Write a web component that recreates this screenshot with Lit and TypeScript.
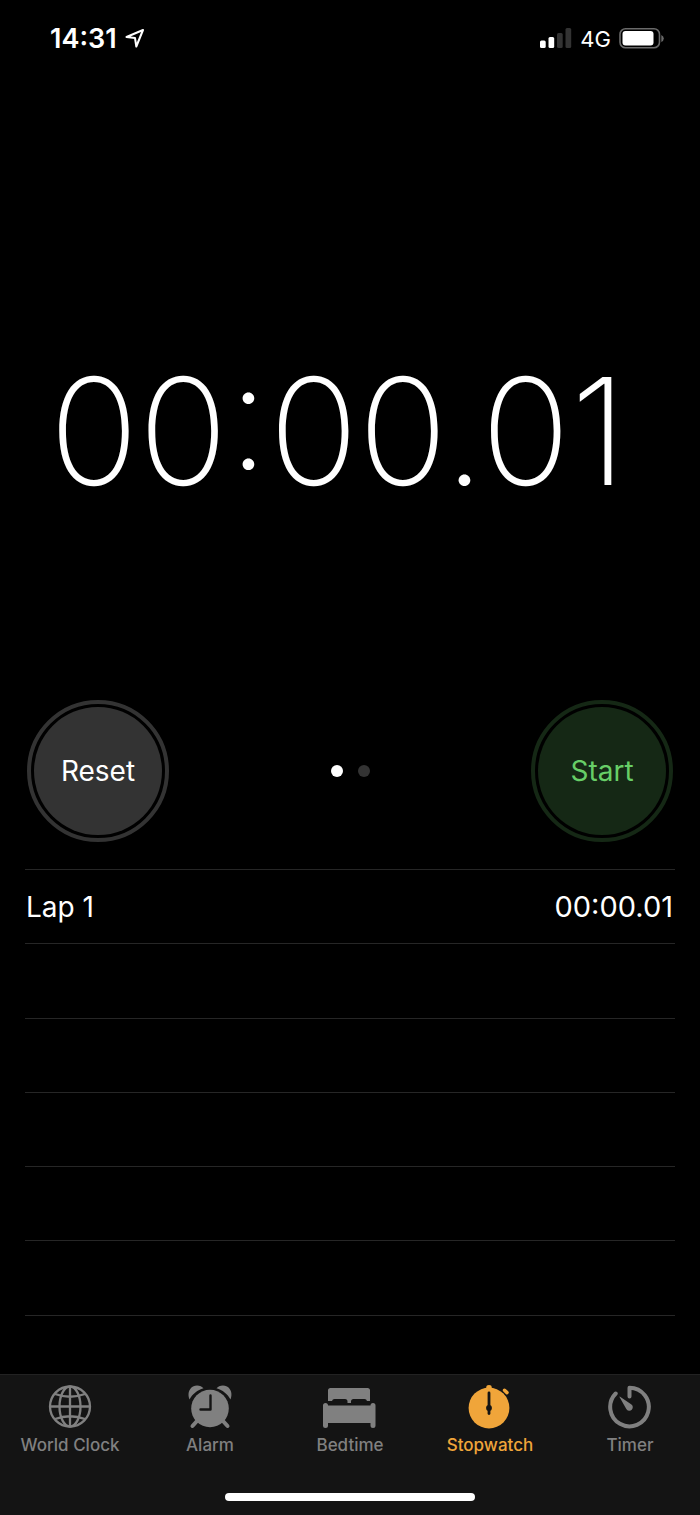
import { LitElement, html, css, svg } from "lit";
import { customElement, property, state } from "lit/decorators.js";
import { classMap } from "lit/directives/class-map.js";

const icons = {
  world: svg`
    <g fill="none" stroke="currentColor" stroke-width="2.3">
      <circle cx="28" cy="22.500" r="20" />
      <ellipse cx="28" cy="22.500" rx="10.5" ry="20" />
      <path d="M28 2.500v40M8 22.500h40M13 10q15 5.500 30 0M13 35q15-5.500 30 0" />
    </g>`,
  alarm: svg`
    <g fill="currentColor">
      <path d="M7.500 15.500C5.500 10.500 6.500 5 11 2.500c4-2 8.500-.7 10.500 1.800C15.500 6 10.500 10 7.500 15.500z" />
      <path d="M48.500 15.500C50.500 10.500 49.500 5 45 2.500c-4-2-8.500-.7-10.500 1.800C40.500 6 45.500 10 48.500 15.500z" />
      <circle cx="28" cy="24.500" r="18.800" />
    </g>
    <path d="M15 37l-4.500 5M41 37l4.500 5" stroke="currentColor" stroke-width="4" stroke-linecap="round" />
    <path d="M28.500 11.500v14H18.500" fill="none" stroke="#141414" stroke-width="2.400" stroke-linecap="round" stroke-linejoin="round" />`,
  bed: svg`
    <g fill="currentColor">
      <path d="M6 17V6.500Q6 4 8.500 4H45.500Q48 4 48 6.500V17h-3q-.5-2-2.500-2H31.500q-2.500 0-2.500 2.500V19h-3.500v-1.500q0-2.500-2.500-2.500H12.500q-2 0-2.500 2z" />
      <path d="M1 21.500Q1 19 3.500 19T6 21.500h42.500Q48.500 19 51 19T53.500 21.500V41.500Q53.500 44 51 44T48.500 41.500V39H6v2.500Q6 44 3.500 44T1 41.500z" />
    </g>`,
  stopwatch: svg`
    <circle cx="27" cy="24" r="20.400" fill="currentColor" />
    <path d="M24.300 7V3.300Q24.300 1 27 1t2.700 2.300V7z" fill="currentColor" />
    <path d="M42.500 6.300l2.500 2.300" stroke="currentColor" stroke-width="3.600" stroke-linecap="round" />
    <path d="M27 9v20.500" stroke="#141414" stroke-width="2.800" stroke-linecap="round" />
    <circle cx="27" cy="24" r="2.900" fill="#141414" />`,
  timer: svg`
    <path d="M13.700 9.500A19.300 19.300 0 1 0 27.500 3.700V12.500" fill="none" stroke="currentColor" stroke-width="4" stroke-linecap="round" stroke-linejoin="round" />
    <path d="M17.500 13q-.5-.8.600-.3l11 7.600a3.500 3.500 0 1 1-4.800 4.800z" fill="currentColor" />`,
};

type IconName = keyof typeof icons;

const TABS: { id: string; label: string; icon: IconName }[] = [
  { id: "world", label: "World Clock", icon: "world" },
  { id: "alarm", label: "Alarm", icon: "alarm" },
  { id: "bedtime", label: "Bedtime", icon: "bed" },
  { id: "stopwatch", label: "Stopwatch", icon: "stopwatch" },
  { id: "timer", label: "Timer", icon: "timer" },
];

@customElement("status-bar")
class StatusBar extends LitElement {
  static styles = css`
    :host {
      display: flex;
      align-items: center;
      justify-content: space-between;
      box-sizing: border-box;
      height: 76px;
      padding: 2px 36px 0 50px;
    }
    .group { display: flex; align-items: center; }
    .left { gap: 8px; }
    .right { gap: 8px; }
    .time { font-size: 27px; line-height: 32px; font-weight: 600; }
    .network { font-size: 22px; line-height: 32px; }
    svg { display: block; }
  `;

  render() {
    return html`
      <div class="group left">
        <span class="time">14:31</span>
        <svg width="20" height="20" viewBox="0 0 20 20" aria-hidden="true">
          <path d="M1.500 8L18 1 11.300 17.500 10 9z" fill="none" stroke="#fff" stroke-width="2" stroke-linejoin="round" />
        </svg>
      </div>
      <div class="group right">
        <svg width="32" height="22" viewBox="0 0 32 22" aria-hidden="true">
          <rect x="0" y="12.500" width="5.700" height="7.500" rx="1.500" fill="#fff" />
          <rect x="8.500" y="9" width="5.700" height="11" rx="1.500" fill="#fff" />
          <rect x="17" y="5" width="5.700" height="15" rx="1.500" fill="#333" />
          <rect x="25.500" y="0" width="5.700" height="20" rx="1.500" fill="#333" />
        </svg>
        <span class="network">4G</span>
        <svg width="45" height="22" viewBox="0 0 45 22" aria-hidden="true">
          <rect x="1" y=".8" width="39.500" height="19" rx="5.500" fill="none" stroke="#6a6a6a" stroke-width="1.600" />
          <rect x="3.500" y="3" width="31" height="14.500" rx="3" fill="#fff" />
          <path d="M42.300 7q2.500 1.200 2.500 3.500t-2.500 3.500z" fill="#6a6a6a" />
        </svg>
      </div>
    `;
  }
}

@customElement("tab-bar")
class TabBar extends LitElement {
  @property() active = "stopwatch";

  static styles = css`
    :host {
      display: block;
      background: #141414;
      border-top: 1px solid #222;
    }
    .tabs { display: grid; grid-template-columns: repeat(5, 1fr); padding-top: 9px; }
    .tab {
      display: flex;
      flex-direction: column;
      align-items: center;
      gap: 4px;
      padding: 0;
      border: 0;
      background: none;
      color: #808080;
      font: 500 17px/24px Inter, sans-serif;
      white-space: nowrap;
      cursor: pointer;
    }
    .active { color: #f0a53a; }
    .icon { display: block; }
    .home { width: 250px; height: 8px; margin: 36px auto 14px; border-radius: 4px; background: #fff; }
  `;

  render() {
    return html`
      <nav class="tabs" aria-label="Clock sections">
        ${TABS.map(
          (t) => html`
            <button
              class=${classMap({ tab: true, active: t.id === this.active })}
              @click=${() => this.dispatchEvent(new CustomEvent("select-tab", { detail: t.id }))}
            >
              <svg class="icon" width="56" height="45" viewBox="0 0 56 45" aria-hidden="true">${icons[t.icon]}</svg>
              <span>${t.label}</span>
            </button>
          `
        )}
      </nav>
      <div class="home"></div>
    `;
  }
}

@customElement("app-root")
class AppRoot extends LitElement {
  @state() private tab = "stopwatch";
  @state() private laps = [{ name: "Lap 1", time: "00:00.01" }];

  static styles = css`
    :host {
      display: flex;
      flex-direction: column;
      min-height: 100vh;
      background: #000;
      color: #fff;
      font-family: Inter, sans-serif;
    }
    .main { flex: 1; display: flex; flex-direction: column; }
    .face {
      flex: 624 1 0;
      display: grid;
      place-items: center;
    }
    .elapsed {
      padding: 88px 32px 0 8px;
      font-size: 148px;
      line-height: 180px;
      font-weight: 200;
    }
    .controls { display: flex; align-items: center; justify-content: space-between; padding: 0 27px; }
    .round {
      width: 142px;
      height: 142px;
      padding: 3px;
      border: 4px solid currentColor;
      border-radius: 50%;
      background-clip: content-box;
      font: 400 28px/36px Inter, sans-serif;
      cursor: pointer;
    }
    .reset { color: #fff; border-color: #333; background-color: #333; }
    .start { color: #67ce67; border-color: #152815; background-color: #152815; }
    .dots { display: flex; gap: 15px; }
    .dot { width: 12px; height: 12px; border-radius: 50%; background: #333; }
    .current { background: #fff; }
    .laps {
      flex: 505 1 0;
      display: grid;
      grid-template-rows: repeat(6, 5fr) 4fr;
      margin: 27px 25px 0;
    }
    .laps tbody { display: contents; }
    .row {
      display: flex;
      align-items: center;
      justify-content: space-between;
      border-top: 1px solid #262626;
      font-size: 28px;
      line-height: 36px;
    }
    .cell { padding: 0 2px 0 1px; font-weight: 400; }
    .value { font-size: 29px; }
  `;

  render() {
    const blanks = Array.from({ length: Math.max(0, 7 - this.laps.length) });
    return html`
      <status-bar></status-bar>
      <main class="main">
        <div class="face"><div class="elapsed" role="timer">00:00.01</div></div>
        <div class="controls">
          <button class="round reset">Reset</button>
          <div class="dots">
            <span class="dot current"></span>
            <span class="dot"></span>
          </div>
          <button class="round start">Start</button>
        </div>
        <table class="laps" aria-label="Laps">
          <tbody>
            ${this.laps.map(
              (l) => html`<tr class="row"><th class="cell" scope="row">${l.name}</th><td class="cell value">${l.time}</td></tr>`
            )}
            ${blanks.map(() => html`<tr class="row"></tr>`)}
          </tbody>
        </table>
      </main>
      <tab-bar .active=${this.tab} @select-tab=${(e: CustomEvent) => (this.tab = e.detail)}></tab-bar>
    `;
  }
}
